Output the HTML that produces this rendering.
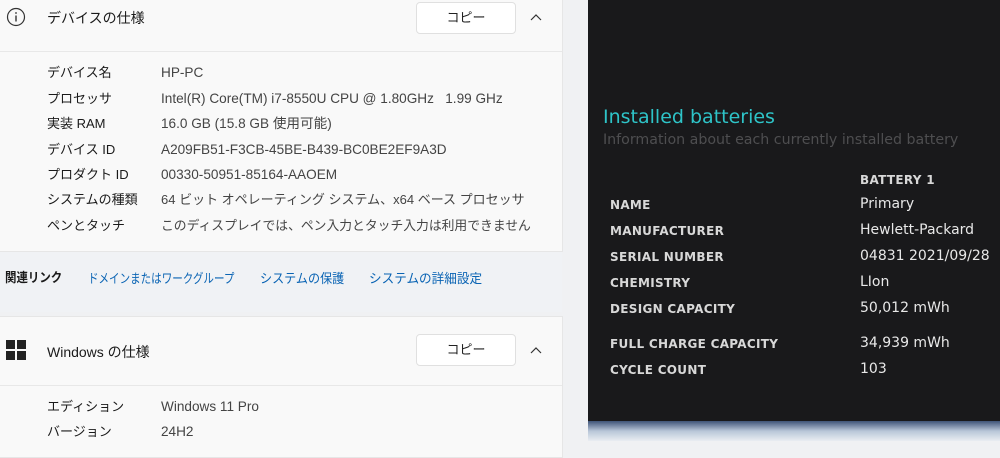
<!DOCTYPE html><html><head><meta charset="utf-8"><style>
body{margin:0;width:1000px;height:441px;overflow:hidden;position:relative;background:#f0f1f3;font-family:"Liberation Sans","Noto Sans CJK JP",sans-serif;}
.a{position:absolute;white-space:nowrap;line-height:16px}
.card{position:absolute;left:0;width:562px;background:#f9f9f9;border:1px solid #e6e6e6;border-left:none}
.btn{position:absolute;left:416px;width:98px;height:30px;background:#fff;border:1px solid #e0e0e0;border-radius:4px;font-size:13px;text-align:center;line-height:30px;color:#222}
.lab{font-size:13px;color:#1a1a1a}
.val{font-size:13.6px;color:#444}
.lk{font-size:13px;color:#0a64b4;top:271px;transform-origin:left center}
.dk{position:absolute;left:588px;top:0;width:412px;height:421px;background:#19191b}
.bl{font-family:"DejaVu Sans",sans-serif;font-weight:bold;font-size:12px;color:#d8d8d8;letter-spacing:.3px}
.bv{font-family:"DejaVu Sans",sans-serif;font-size:14px;color:#e8e8e8}
</style></head><body>
<div class="card" style="top:-2px;height:252px"></div>
<div class="a" style="left:0;top:51px;width:562px;height:1px;background:#e8e8e8"></div>
<div class="card" style="top:316px;height:140px"></div>
<div class="a" style="left:0;top:385px;width:562px;height:1px;background:#e8e8e8"></div>
<div class="a" style="left:0;top:252px;width:562px;height:60px;background:#f0f2f5"></div>
<svg class="a" style="left:6px;top:7px" width="20" height="20"><circle cx="10" cy="10" r="8.5" fill="none" stroke="#333" stroke-width="1.2"/><rect x="9.3" y="8.5" width="1.4" height="6" fill="#333"/><circle cx="10" cy="6" r=".9" fill="#333"/></svg>
<div class="a lab" style="left:47px;top:10px;font-size:14px">デバイスの仕様</div>
<div class="btn" style="top:2px">コピー</div>
<svg class="a" style="left:530px;top:13px" width="12" height="8"><path d="M1 7 L6 2 L11 7" fill="none" stroke="#333" stroke-width="1.2"/></svg>
<div class="a lab" style="left:47px;top:65px">デバイス名</div><div class="a val" style="left:161px;top:65px">HP-PC</div>
<div class="a lab" style="left:47px;top:91px">プロセッサ</div><div class="a val" style="left:161px;top:91px">Intel(R) Core(TM) i7-8550U CPU @ 1.80GHz&nbsp;&nbsp;&nbsp;1.99 GHz</div>
<div class="a lab" style="left:47px;top:116px">実装 RAM</div><div class="a val" style="left:161px;top:116px">16.0 GB (15.8 GB 使用可能)</div>
<div class="a lab" style="left:47px;top:142px">デバイス ID</div><div class="a val" style="left:161px;top:142px">A209FB51-F3CB-45BE-B439-BC0BE2EF9A3D</div>
<div class="a lab" style="left:47px;top:167px">プロダクト ID</div><div class="a val" style="left:161px;top:167px">00330-50951-85164-AAOEM</div>
<div class="a lab" style="left:47px;top:192px">システムの種類</div><div class="a val" style="left:161px;top:192px;font-size:13px">64 ビット オペレーティング システム、x64 ベース プロセッサ</div>
<div class="a lab" style="left:47px;top:218px">ペンとタッチ</div><div class="a val" style="left:161px;top:218px;font-size:12.8px">このディスプレイでは、ペン入力とタッチ入力は利用できません</div>
<div class="a lab" style="left:5px;top:270px;font-weight:bold;transform:scaleX(.88);transform-origin:left center">関連リンク</div>
<div class="a lk" style="left:88px;transform:scaleX(.81)">ドメインまたはワークグループ</div>
<div class="a lk" style="left:260px;transform:scaleX(.93)">システムの保護</div>
<div class="a lk" style="left:369px;transform:scaleX(.97)">システムの詳細設定</div>
<svg class="a" style="left:6px;top:340px" width="20" height="20"><rect x="0" y="0" width="9" height="9" fill="#222"/><rect x="11" y="0" width="9" height="9" fill="#222"/><rect x="0" y="11" width="9" height="9" fill="#222"/><rect x="11" y="11" width="9" height="9" fill="#222"/></svg>
<div class="a lab" style="left:47px;top:344px;font-size:14px">Windows の仕様</div>
<div class="btn" style="top:334px">コピー</div>
<svg class="a" style="left:530px;top:346px" width="12" height="8"><path d="M1 7 L6 2 L11 7" fill="none" stroke="#333" stroke-width="1.2"/></svg>
<div class="a lab" style="left:47px;top:399px">エディション</div><div class="a val" style="left:161px;top:399px">Windows 11 Pro</div>
<div class="a lab" style="left:47px;top:424px">バージョン</div><div class="a val" style="left:161px;top:424px">24H2</div>
<div class="dk"></div>
<div class="a" style="left:588px;top:421px;width:412px;height:20px;background:linear-gradient(180deg,#3f5478,#b8c6d8 50%,#e9edf2)"></div>
<div class="a" style="left:603px;top:106px;font-family:'DejaVu Sans',sans-serif;font-size:19px;line-height:22px;color:#2ec4c8">Installed batteries</div>
<div class="a" style="left:603px;top:132px;font-family:'DejaVu Sans',sans-serif;font-size:14.2px;color:#4e4e50">Information about each currently installed battery</div>
<div class="a bl" style="left:860px;top:172px">BATTERY 1</div>
<div class="a bl" style="left:610px;top:197px">NAME</div><div class="a bv" style="left:860px;top:196px">Primary</div>
<div class="a bl" style="left:610px;top:223px">MANUFACTURER</div><div class="a bv" style="left:860px;top:222px">Hewlett-Packard</div>
<div class="a bl" style="left:610px;top:249px">SERIAL NUMBER</div><div class="a bv" style="left:860px;top:248px">04831 2021/09/28</div>
<div class="a bl" style="left:610px;top:275px">CHEMISTRY</div><div class="a bv" style="left:860px;top:274px">LIon</div>
<div class="a bl" style="left:610px;top:301px">DESIGN CAPACITY</div><div class="a bv" style="left:860px;top:300px">50,012 mWh</div>
<div class="a bl" style="left:610px;top:336px">FULL CHARGE CAPACITY</div><div class="a bv" style="left:860px;top:335px">34,939 mWh</div>
<div class="a bl" style="left:610px;top:362px">CYCLE COUNT</div><div class="a bv" style="left:860px;top:361px">103</div>
</body></html>
